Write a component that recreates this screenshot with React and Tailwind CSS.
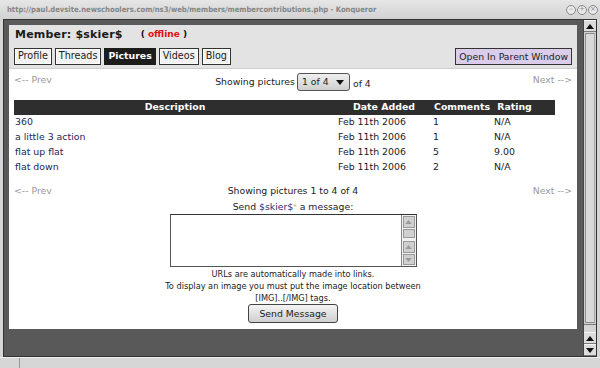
const pictures = [
  { title: "360", date: "Feb 11th 2006", comments: "1", rating: "N/A" },
  { title: "a little 3 action", date: "Feb 11th 2006", comments: "1", rating: "N/A" },
  { title: "flat up flat", date: "Feb 11th 2006", comments: "5", rating: "9.00" },
  { title: "flat down", date: "Feb 11th 2006", comments: "2", rating: "N/A" },
];

const tabs = ["Profile", "Threads", "Pictures", "Videos", "Blog"];

const Arrow = ({ down, small }) => (
  <svg width={small ? 7 : 8} height={small ? 4 : 5} viewBox="0 0 8 5">
    <path d={down ? "M0 0 L8 0 L4 5 Z" : "M0 5 L8 5 L4 0 Z"} fill={small ? "#9a9a9a" : "#111"} />
  </svg>
);

const ScrollButton = ({ down }) => (
  <div className="h-[12px] flex items-center justify-center bg-[#dcdcdc] border-t border-[#f4f4f4] border-b border-b-[#7a7a7a]">
    <Arrow down={down} />
  </div>
);

const WindowButton = ({ glyph }) => (
  <div className="w-[10px] h-[10px] rounded-full border border-[#8a8a8a] bg-[#e8e8e8] flex items-center justify-center text-[7px] leading-none text-[#8a8a8a]">
    {glyph}
  </div>
);

const Scrollbar = () => (
  <div className="w-[13px] flex flex-col bg-[#cfcfcf] border-l border-[#444]">
    <ScrollButton />
    <div className="flex-1 mx-[1px] my-[1px] bg-[#d8d8d8] border border-[#8c8c8c] border-r-[#a8a8a8]" />
    <div className="h-[8px] bg-[#d4d4d4] border-t border-[#7a7a7a]" />
    <ScrollButton />
    <ScrollButton down />
  </div>
);

const Tab = ({ label }) => {
  const active = label === "Pictures";
  return (
    <div
      className={
        active
          ? "h-[17px] px-[3px] flex items-center bg-[#1c1c1c] border border-[#1c1c1c] text-white font-bold text-[9.4px]"
          : "h-[17px] px-[3px] flex items-center bg-[#f2f2f2] border border-[#333] outline outline-1 outline-offset-[-2px] outline-white text-[#222] text-[9.6px]"
      }
    >
      {label}
    </div>
  );
};

const TextBox = () => (
  <div className="w-[247px] h-[53px] mt-[1px] border border-[#555] border-t-[#333] bg-white flex justify-end">
    <div className="w-[15px] flex flex-col gap-[1px] p-[1px] bg-[#f0f0f0] border-l border-[#888]">
      <div className="h-[12px] bg-[#d0d0d0] border border-[#999] flex items-center justify-center"><Arrow small /></div>
      <div className="h-[9px] bg-[#d0d0d0] border border-[#999]" />
      <div className="flex-1" />
      <div className="h-[12px] bg-[#d0d0d0] border border-[#999] flex items-center justify-center"><Arrow small /></div>
      <div className="h-[11px] bg-[#d0d0d0] border border-[#999] flex items-center justify-center"><Arrow small down /></div>
    </div>
  </div>
);

const Panel = () => (
  <div className="bg-white text-[#222]">
    <div className="bg-[#e3e3e3] border-b border-[#d0d0d0] px-[5px] pt-[3px] pb-[3px]">
      <div className="h-[14px] flex items-center">
        <span className="ml-[1px] text-[11px] font-bold text-[#1a1a1a] tracking-[0.2px]">Member: $skier$</span>
        <span className="ml-[18px] text-[9px] font-bold text-[#111]">
          (&nbsp;<span className="text-[#e01010]">offline</span>&nbsp;)
        </span>
      </div>
      <div className="mt-[6px] flex justify-between">
        <div className="flex gap-[3px]">
          {tabs.map((t) => (
            <Tab key={t} label={t} />
          ))}
        </div>
        <div className="h-[17px] px-[3px] flex items-center bg-[#dacdea] border border-[#333] text-[9.3px] text-[#222]">
          Open In Parent Window
        </div>
      </div>
    </div>

    <div className="px-[5px] pb-[6px]">
      <div className="pt-[4px] flex items-start justify-between text-[9.3px] leading-[12px]">
        <span className="mt-[1px] text-[#9a9a9a] w-[60px]">&lt;-- Prev</span>
        <div className="flex items-center gap-[2px] h-[18px]">
          <span>Showing pictures</span>
          <div className="w-[53px] h-[18px] flex items-center justify-between pl-[4px] pr-[5px] border border-[#555] rounded-[3px] bg-gradient-to-b from-[#efefef] to-[#cfcfcf]">
            <span>1 of 4</span>
            <Arrow down />
          </div>
          <span className="ml-[1px] mt-[3px]">of 4</span>
        </div>
        <span className="mt-[1px] text-[#9a9a9a] w-[60px] text-right">Next --&gt;</span>
      </div>

      <table className="mt-[9px] w-[541px] border-collapse table-fixed text-[9.4px]">
        <thead>
          <tr className="h-[15px] bg-[#2e2e2e] text-white font-bold">
            <th className="w-[322px] p-0 text-center">Description</th>
            <th className="w-[96px] p-0 text-center">Date Added</th>
            <th className="w-[60px] p-0 text-center">Comments</th>
            <th className="w-[45px] p-0 text-center">Rating</th>
            <th className="w-[18px] p-0" />
          </tr>
        </thead>
        <tbody>
          {pictures.map((p) => (
            <tr key={p.title} className="h-[15px]">
              <td className="p-0 pl-[1px] text-[#25255a]">{p.title}</td>
              <td className="p-0 pl-[2px]">{p.date}</td>
              <td className="p-0 pl-[1px]">{p.comments}</td>
              <td className="p-0 pl-[2px]">{p.rating}</td>
              <td className="p-0" />
            </tr>
          ))}
        </tbody>
      </table>

      <div className="mt-[10px] flex items-start justify-between text-[9.3px] leading-[12px]">
        <span className="text-[#9a9a9a] w-[60px]">&lt;-- Prev</span>
        <span>Showing pictures 1 to 4 of 4</span>
        <span className="text-[#9a9a9a] w-[60px] text-right">Next --&gt;</span>
      </div>

      <div className="mt-[4px] flex flex-col items-center text-[9.3px] leading-[12px]">
        <span>
          Send <span className="text-[#2a2a7a]">$skier$</span>
          <span className="text-[#e8a040] text-[7px] align-top">*</span> a message:
        </span>
        <TextBox />
        <span className="mt-[1px] text-[8.2px]">URLs are automatically made into links.</span>
        <span className="text-[8.2px]">To display an image you must put the image location between</span>
        <span className="text-[8.2px]">[IMG]..[/IMG] tags.</span>
        <div className="w-[90px] h-[19px] flex items-center justify-center border border-[#444] rounded-[3px] bg-gradient-to-b from-[#f4f4f4] to-[#cfcfcf] text-[9.3px]">
          Send Message
        </div>
      </div>
    </div>
  </div>
);

export default function App() {
  return (
    <div className="w-[600px] h-[368px] bg-[#d6d6d6] flex flex-col overflow-hidden font-['DejaVu_Sans',sans-serif]">
      <div className="h-[19px] flex items-center justify-between pl-[7px] pr-[2px] bg-gradient-to-b from-[#e6e6e6] to-[#d2d2d2]">
        <span className="text-[7.6px] font-bold text-[#858585] font-['DejaVu_Sans_Condensed','DejaVu_Sans',sans-serif]">
          http://paul.devsite.newschoolers.com/ns3/web/members/membercontributions.php - Konqueror
        </span>
        <div className="flex gap-[1px]">
          <WindowButton glyph="–" />
          <WindowButton glyph="+" />
          <WindowButton glyph="×" />
        </div>
      </div>
      <div className="flex-1 min-h-0 px-[3px] flex">
        <div className="flex-1 flex border border-[#333]">
          <div className="flex-1 bg-[#595959] pt-[5px] pl-[5px] pr-[6px]">
            <Panel />
          </div>
          <Scrollbar />
        </div>
      </div>
      <div className="h-[11px] border-t border-[#f0f0f0] bg-[#d6d6d6] flex">
        <div className="w-[20px] border-r border-[#999]" />
        <div className="flex-1" />
      </div>
    </div>
  );
}
